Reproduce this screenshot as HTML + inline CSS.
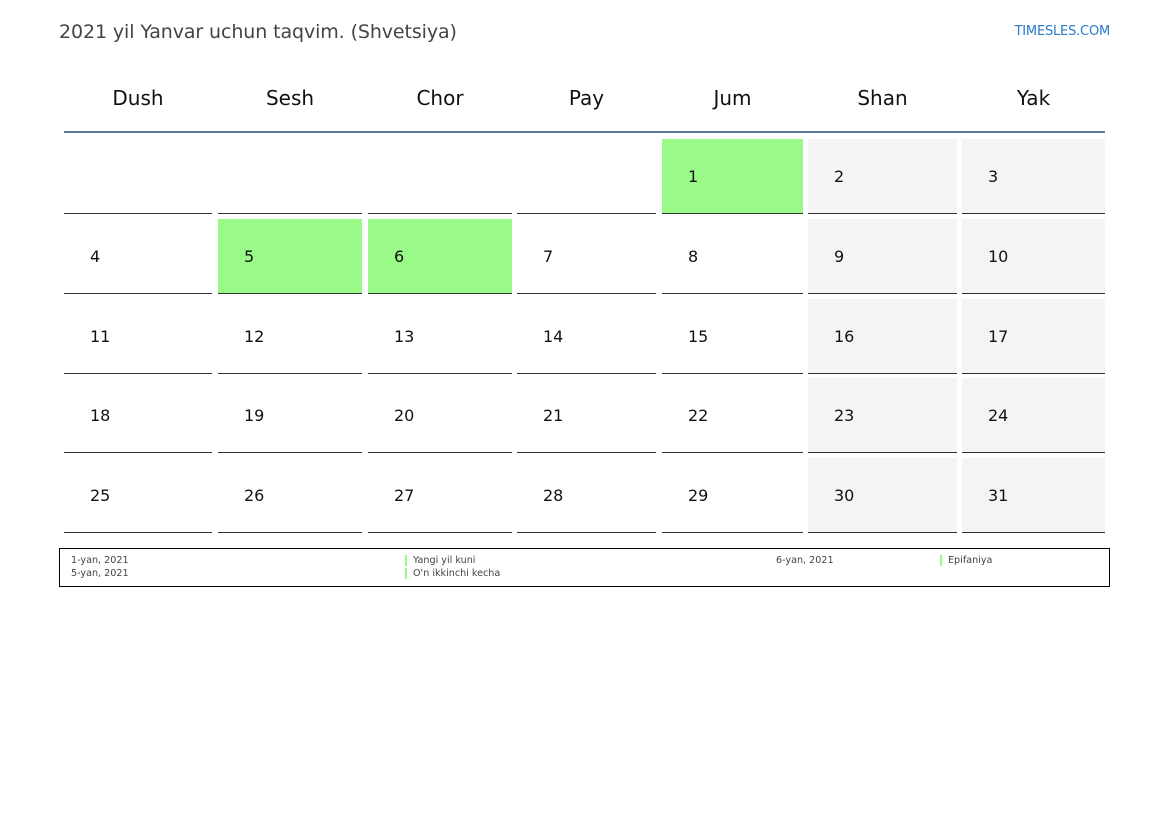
<!DOCTYPE html>
<html><head><meta charset="utf-8"><style>
body{margin:0;width:1169px;height:827px;background:#fff;font-family:"DejaVu Sans","Liberation Sans",sans-serif;position:relative;overflow:hidden}
.a{position:absolute}
.t{left:59px;top:21px;font-size:19px;color:#444;letter-spacing:-0.1px}
.s{right:59px;top:24px;font-size:13px;color:#2a7ac7;letter-spacing:-0.2px}
.h{top:86px;font-size:20px;color:#111;text-align:center}
.c{border-bottom:1px solid #333;box-sizing:border-box}
.n{position:absolute;left:26px;top:28px;font-size:16px;color:#111}
.l{font-size:9.6px;color:#444}
.g{width:2px;height:11px;background:#9afa88}
</style></head><body>
<div class="a t">2021 yil Yanvar uchun taqvim. (Shvetsiya)</div>
<div class="a s">TIMESLES.COM</div>
<div class="a" style="left:64px;top:131px;width:1041px;height:2px;background:#5a7aa0"></div>
<div id="g"></div>
<div class="a" style="left:59px;top:548px;width:1049px;height:37px;border:1px solid #000"></div>
<div class="a l" style="left:71px;top:555px">1-yan, 2021</div>
<div class="a l" style="left:71px;top:568px">5-yan, 2021</div>
<div class="a g" style="left:405px;top:555px"></div>
<div class="a g" style="left:405px;top:568px"></div>
<div class="a l" style="left:413px;top:555px">Yangi yil kuni</div>
<div class="a l" style="left:413px;top:568px">O'n ikkinchi kecha</div>
<div class="a l" style="left:776px;top:555px">6-yan, 2021</div>
<div class="a g" style="left:940px;top:555px"></div>
<div class="a l" style="left:948px;top:555px">Epifaniya</div>
<script>
var cols=[[64,212],[218,362],[368,512],[517,656],[662,803],[808,957],[962,1105]];
var rows=[139,219,299,378,458];
var names=["Dush","Sesh","Chor","Pay","Jum","Shan","Yak"];
var h="";
cols.forEach(function(c,i){h+='<div class="a h" style="left:'+c[0]+'px;width:'+(c[1]-c[0])+'px">'+names[i]+'</div>';});
var green={1:1,5:1,6:1};
for(var r=0;r<5;r++)for(var k=0;k<7;k++){
 var d=r*7+k-3;var c=cols[k];
 var bg=(d>=1&&green[d])?'#9afa88':(k>=5?'#f4f4f4':'#fff');
 h+='<div class="a c" style="left:'+c[0]+'px;top:'+rows[r]+'px;width:'+(c[1]-c[0])+'px;height:75px;background:'+bg+'">'+(d>=1?'<span class="n">'+d+'</span>':'')+'</div>';
}
document.getElementById("g").innerHTML=h;
</script>
</body></html>
